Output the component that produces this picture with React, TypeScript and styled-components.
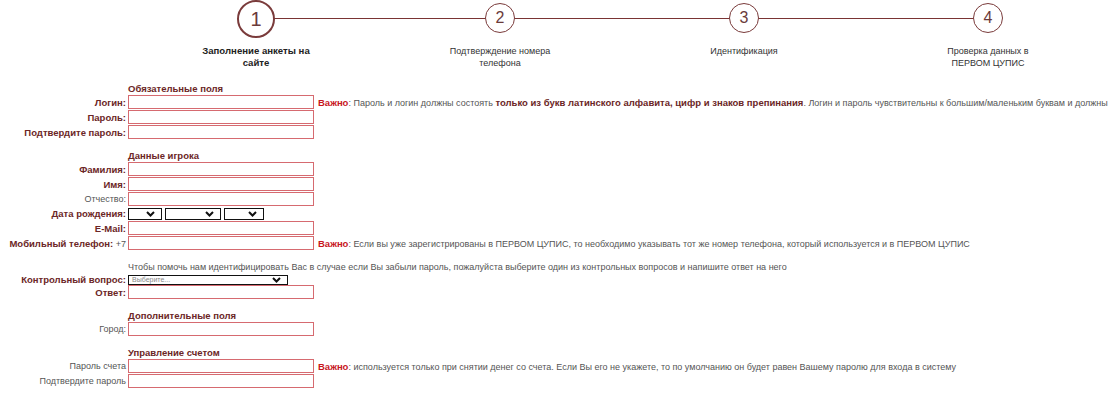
import React from "react";
import styled, { createGlobalStyle } from "styled-components";

const GlobalStyle = createGlobalStyle`
  html, body {
    margin: 0;
    padding: 0;
    background: #fff;
    overflow: hidden;
  }
  body {
    font-family: Tahoma, "Liberation Sans", Arial, sans-serif;
    font-size: 9px;
    color: #555;
  }
`;

const steps = [
  { n: 1, title: "Заполнение анкеты на сайте", active: true },
  { n: 2, title: "Подтверждение номера телефона" },
  { n: 3, title: "Идентификация" },
  { n: 4, title: "Проверка данных в ПЕРВОМ ЦУПИС" },
];

const App = () => {
  return (
    <Page>
      <GlobalStyle />
      <Stepper>
        {steps.map((s, i) => (
          <Step key={s.n} $first={i === 0}>
            <CircleSlot>
              <Circle $active={!!s.active}>{s.n}</Circle>
            </CircleSlot>
            <StepTitle $active={!!s.active}>{s.title}</StepTitle>
          </Step>
        ))}
      </Stepper>

      <Form>
        <Section>
          <Header>Обязательные поля</Header>
          <Row>
            <Label $strong>Логин:</Label>
            <Input />
            <Note>
              <Important>Важно</Important>: Пароль и логин должны состоять{" "}
              <Strong>только из букв латинского алфавита, цифр и знаков препинания</Strong>.
              Логин и пароль чувствительны к большим/маленьким буквам и должны
            </Note>
          </Row>
          <Row>
            <Label $strong>Пароль:</Label>
            <Input type="password" />
          </Row>
          <Row>
            <Label $strong>Подтвердите пароль:</Label>
            <Input type="password" />
          </Row>
        </Section>

        <Section>
          <Header>Данные игрока</Header>
          <Row>
            <Label $strong>Фамилия:</Label>
            <Input />
          </Row>
          <Row>
            <Label $strong>Имя:</Label>
            <Input />
          </Row>
          <Row>
            <Label>Отчество:</Label>
            <Input />
          </Row>
          <Row $short>
            <Label $strong>Дата рождения:</Label>
            <Selects>
              <SelectBox $w={34} />
              <SelectBox $w={56} />
              <SelectBox $w={40} />
            </Selects>
          </Row>
          <Row>
            <Label $strong>E-Mail:</Label>
            <Input />
          </Row>
          <Row>
            <Label $strong>
              Мобильный телефон: <Plain>+7</Plain>
            </Label>
            <Input />
            <Note>
              <Important>Важно</Important>: Если вы уже зарегистрированы в ПЕРВОМ ЦУПИС, то
              необходимо указывать тот же номер телефона, который используется и в ПЕРВОМ ЦУПИС
            </Note>
          </Row>
        </Section>

        <Section $gap={11}>
          <Hint>
            Чтобы помочь нам идентифицировать Вас в случае если Вы забыли пароль, пожалуйста
            выберите один из контрольных вопросов и напишите ответ на него
          </Hint>
          <Row $tiny>
            <Label $strong>Контрольный вопрос:</Label>
            <SelectBox $w={160} $small>
              <span>Выберите...</span>
            </SelectBox>
          </Row>
          <Row>
            <Label $strong>Ответ:</Label>
            <Input />
          </Row>
        </Section>

        <Section>
          <Header>Дополнительные поля</Header>
          <Row>
            <Label>Город:</Label>
            <Input />
          </Row>
        </Section>

        <Section $gap={11}>
          <Header>Управление счетом</Header>
          <Row>
            <Label>Пароль счета</Label>
            <Input type="password" />
            <Note>
              <Important>Важно</Important>: используется только при снятии денег со счета.
              Если Вы его не укажете, то по умолчанию он будет равен Вашему паролю для входа в
              систему
            </Note>
          </Row>
          <Row>
            <Label>Подтвердите пароль</Label>
            <Input type="password" />
          </Row>
        </Section>
      </Form>
    </Page>
  );
};

const SelectBox = ({
  $w,
  $small,
  children,
}: {
  $w: number;
  $small?: boolean;
  children?: React.ReactNode;
}) => (
  <Dropdown $w={$w} $small={$small}>
    <DropText>{children}</DropText>
    <svg width="9" height="6" viewBox="0 0 9 6">
      <path d="M1 1 L4.5 4.5 L8 1" fill="none" stroke="#111" strokeWidth="2" />
    </svg>
  </Dropdown>
);

const Page = styled.div`
  width: 1109px;
  height: 394px;
  overflow: hidden;
`;

const Stepper = styled.div`
  display: grid;
  grid-template-columns: repeat(4, 244px);
  margin-left: 134px;
  height: 83px;
`;

const Step = styled.div<{ $first: boolean }>`
  position: relative;
  display: flex;
  flex-direction: column;
  align-items: center;

  &::before {
    content: "";
    display: ${(p) => (p.$first ? "none" : "block")};
    position: absolute;
    top: 18px;
    left: -50%;
    width: 100%;
    height: 1px;
    background: #7a3434;
  }
`;

const CircleSlot = styled.div`
  height: 38px;
  display: flex;
  align-items: center;
  justify-content: center;
`;

const Circle = styled.div<{ $active: boolean }>`
  position: relative;
  z-index: 1;
  box-sizing: border-box;
  width: ${(p) => (p.$active ? 38 : 30)}px;
  height: ${(p) => (p.$active ? 38 : 30)}px;
  margin-top: ${(p) => (p.$active ? 0 : -2)}px;
  border: ${(p) => (p.$active ? 2 : 1)}px solid #7a3b3b;
  border-radius: 50%;
  background: #fff;
  color: #6b3a3a;
  font-family: "Liberation Sans", Arial, sans-serif;
  font-size: ${(p) => (p.$active ? 20 : 16)}px;
  display: flex;
  align-items: center;
  justify-content: center;
`;

const StepTitle = styled.div<{ $active: boolean }>`
  margin-top: 7px;
  width: 112px;
  text-align: center;
  font-size: ${(p) => (p.$active ? 9.6 : 9)}px;
  line-height: 12px;
  font-weight: ${(p) => (p.$active ? 700 : 400)};
  color: ${(p) => (p.$active ? "#222" : "#333")};
`;

const Form = styled.div`
  display: flex;
  flex-direction: column;
`;

const Section = styled.div<{ $gap?: number }>`
  display: flex;
  flex-direction: column;
  gap: 1px;
  & + & {
    margin-top: ${(p) => p.$gap ?? 12}px;
  }
`;

const Header = styled.div`
  margin-left: 128px;
  height: 11px;
  line-height: 11px;
  font-size: 9.5px;
  font-weight: 700;
  color: #6b2626;
`;

const Hint = styled.div`
  margin-left: 128px;
  height: 12px;
  line-height: 12px;
  color: #555;
  white-space: nowrap;
`;

const Row = styled.div<{ $short?: boolean; $tiny?: boolean }>`
  display: grid;
  grid-template-columns: 126px auto 1fr;
  column-gap: 2px;
  align-items: center;
  height: ${(p) => (p.$tiny ? 10 : p.$short ? 13 : 14)}px;
`;

const Label = styled.div<{ $strong?: boolean }>`
  text-align: right;
  white-space: nowrap;
  font-size: ${(p) => (p.$strong ? 9.5 : 9)}px;
  font-weight: ${(p) => (p.$strong ? 700 : 400)};
  color: ${(p) => (p.$strong ? "#6b2626" : "#555")};
`;

const Plain = styled.span`
  font-size: 9px;
  font-weight: 400;
  color: #555;
`;

const Input = styled.input`
  box-sizing: border-box;
  width: 186px;
  height: 14px;
  margin: 0;
  padding: 0 2px;
  border: 1px solid #d66a70;
  background: #fff;
  font: inherit;
  outline: none;
`;

const Note = styled.div`
  margin-left: 2px;
  white-space: nowrap;
  overflow: hidden;
  color: #555;
`;

const Strong = styled.span`
  font-size: 9.5px;
  font-weight: 700;
  color: #6b2626;
`;

const Important = styled.span`
  font-size: 9.5px;
  font-weight: 700;
  color: #c8161d;
`;

const Selects = styled.div`
  display: flex;
  gap: 3px;
`;

const Dropdown = styled.div<{ $w: number; $small?: boolean }>`
  box-sizing: border-box;
  width: ${(p) => p.$w}px;
  height: ${(p) => (p.$small ? 10 : 12)}px;
  border: 1px solid #111;
  background: #fff;
  display: flex;
  align-items: center;
  justify-content: space-between;
  padding: 0 6px 0 3px;
`;

const DropText = styled.span`
  font-size: 7px;
  line-height: 8px;
  color: #888;
`;

export default App;
